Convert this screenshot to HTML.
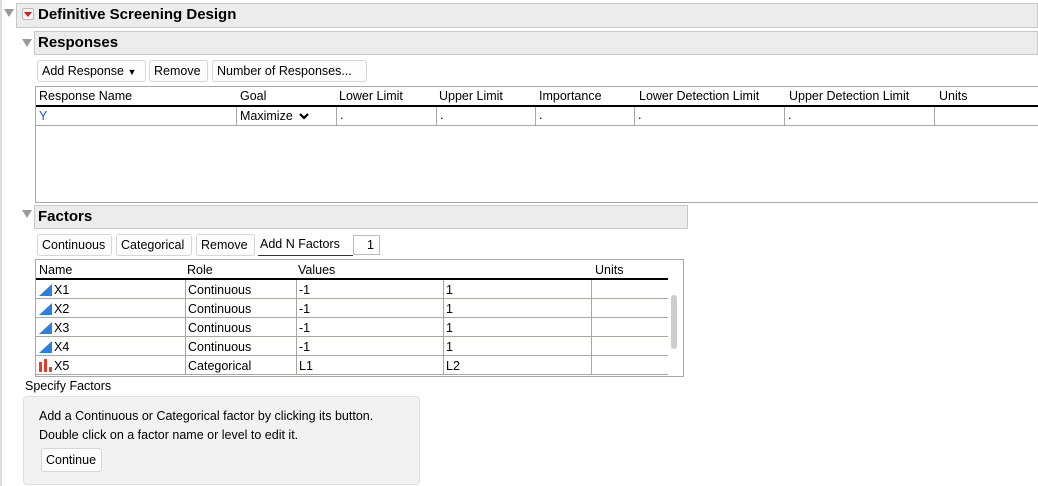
<!DOCTYPE html>
<html><head><style>
*{box-sizing:border-box;margin:0;padding:0}
body{width:1038px;height:486px;background:#fff;font-family:"Liberation Sans",sans-serif;font-size:12.5px;color:#000;position:relative;overflow:hidden}
.a{position:absolute}
.bar{position:absolute;background:#ececec;border:1px solid #c8c8c8;font-weight:bold;font-size:15px;padding-left:3px;line-height:22px}
.tri{position:absolute;width:0;height:0;border-left:5px solid transparent;border-right:5px solid transparent;border-top:8px solid #9a9a9a}
.btn{position:absolute;height:22px;border:1px solid #d6d6d6;border-radius:3px;background:#fdfdfd;line-height:20px;padding-left:4px;white-space:nowrap}
.hl{position:absolute;height:1px;background:#a8a8a0}
.vl{position:absolute;width:1px;background:#a8a8a0}
.t{position:absolute;white-space:nowrap}
.blue{color:#1a5fb0}
</style></head><body>
<div class="a" style="left:0;top:0;width:2px;height:486px;background:#ddd"></div>
<div class="tri" style="left:4px;top:9px"></div>
<div class="bar" style="left:16px;top:3px;width:1022px;height:25px;padding-left:21px">Definitive Screening Design</div>
<div class="a" style="left:22px;top:8px;width:12px;height:12px;border:1px solid #bbb;border-radius:2px;background:#f6f6f6"></div>
<div class="a" style="left:24px;top:12px;width:0;height:0;border-left:4px solid transparent;border-right:4px solid transparent;border-top:5px solid #d02020"></div>

<div class="tri" style="left:22px;top:39px"></div>
<div class="bar" style="left:34px;top:31px;width:1004px;height:24px">Responses</div>
<div class="btn" style="left:37px;top:60px;width:109px">Add Response <span style="font-size:9px">▼</span></div>
<div class="btn" style="left:149px;top:60px;width:59px">Remove</div>
<div class="btn" style="left:212px;top:60px;width:155px">Number of Responses...</div>

<div class="a" style="left:35px;top:86px;width:1010px;height:117px;border:1px solid #a8a8a8"></div>
<div class="a" style="left:36px;top:105px;width:1002px;height:2px;background:#000"></div>
<div class="hl" style="left:36px;top:125px;width:1002px"></div>
<div class="t" style="left:39px;top:89px">Response Name</div>
<div class="t" style="left:240px;top:89px">Goal</div>
<div class="t" style="left:339px;top:89px">Lower Limit</div>
<div class="t" style="left:439px;top:89px">Upper Limit</div>
<div class="t" style="left:539px;top:89px">Importance</div>
<div class="t" style="left:639px;top:89px">Lower Detection Limit</div>
<div class="t" style="left:789px;top:89px">Upper Detection Limit</div>
<div class="t" style="left:939px;top:89px">Units</div>
<div class="vl" style="left:236px;top:107px;height:18px"></div>
<div class="vl" style="left:336px;top:107px;height:18px"></div>
<div class="vl" style="left:436px;top:107px;height:18px"></div>
<div class="vl" style="left:535px;top:107px;height:18px"></div>
<div class="vl" style="left:634px;top:107px;height:18px"></div>
<div class="vl" style="left:784px;top:107px;height:18px"></div>
<div class="vl" style="left:934px;top:107px;height:18px"></div>
<div class="t blue" style="left:39px;top:109px">Y</div>
<div class="t" style="left:240px;top:109px">Maximize</div>
<svg class="a" style="left:298px;top:111px" width="12" height="10"><path d="M2 3 L6 7 L10 3" stroke="#000" stroke-width="2.2" fill="none"/></svg>
<div class="t" style="left:340px;top:108px">.</div>
<div class="t" style="left:440px;top:108px">.</div>
<div class="t" style="left:539px;top:108px">.</div>
<div class="t" style="left:638px;top:108px">.</div>
<div class="t" style="left:788px;top:108px">.</div>

<div class="tri" style="left:22px;top:210px"></div>
<div class="bar" style="left:34px;top:205px;width:654px;height:24px">Factors</div>
<div class="btn" style="left:37px;top:234px;width:75px">Continuous</div>
<div class="btn" style="left:116px;top:234px;width:76px">Categorical</div>
<div class="btn" style="left:196px;top:234px;width:59px">Remove</div>
<div class="t" style="left:260px;top:237px">Add N Factors</div>
<div class="a" style="left:258px;top:255px;width:95px;height:1px;background:#333"></div>
<div class="a" style="left:353px;top:235px;width:27px;height:20px;border:1px solid #bbb;text-align:right;padding-right:5px;line-height:18px">1</div>

<div class="a" style="left:35px;top:259px;width:649px;height:118px;border:1px solid #a8a8a8"></div>
<div class="a" style="left:36px;top:278px;width:632px;height:2px;background:#000"></div>
<div class="t" style="left:39px;top:263px">Name</div>
<div class="t" style="left:187px;top:263px">Role</div>
<div class="t" style="left:298px;top:263px">Values</div>
<div class="t" style="left:595px;top:263px">Units</div>
<div class="hl" style="left:36px;top:298px;width:632px"></div>
<div class="hl" style="left:36px;top:317px;width:632px"></div>
<div class="hl" style="left:36px;top:336px;width:632px"></div>
<div class="hl" style="left:36px;top:355px;width:632px"></div>
<div class="hl" style="left:36px;top:374px;width:632px"></div>
<div class="vl" style="left:185px;top:280px;height:95px"></div>
<div class="vl" style="left:296px;top:280px;height:95px"></div>
<div class="vl" style="left:443px;top:280px;height:95px"></div>
<div class="vl" style="left:591px;top:280px;height:95px"></div>
<div class="a" style="left:671px;top:295px;width:6px;height:54px;border-radius:3px;background:#cdcdcd"></div>

<svg class="a" style="left:39px;top:283px" width="16" height="90">
<polygon points="0,13 13,1 13,13" fill="#2a7fe0"/>
<polygon points="0,32 13,20 13,32" fill="#2a7fe0"/>
<polygon points="0,51 13,39 13,51" fill="#2a7fe0"/>
<polygon points="0,70 13,58 13,70" fill="#2a7fe0"/>
<rect x="0" y="79" width="3" height="10" fill="#e83a2a"/><rect x="5" y="76" width="3" height="13" fill="#e83a2a"/><rect x="10" y="84" width="3" height="5" fill="#e83a2a"/>
</svg>
<div class="t" style="left:54px;top:283px">X1</div><div class="t" style="left:188px;top:283px">Continuous</div><div class="t" style="left:299px;top:283px">-1</div><div class="t" style="left:446px;top:283px">1</div>
<div class="t" style="left:54px;top:302px">X2</div><div class="t" style="left:188px;top:302px">Continuous</div><div class="t" style="left:299px;top:302px">-1</div><div class="t" style="left:446px;top:302px">1</div>
<div class="t" style="left:54px;top:321px">X3</div><div class="t" style="left:188px;top:321px">Continuous</div><div class="t" style="left:299px;top:321px">-1</div><div class="t" style="left:446px;top:321px">1</div>
<div class="t" style="left:54px;top:340px">X4</div><div class="t" style="left:188px;top:340px">Continuous</div><div class="t" style="left:299px;top:340px">-1</div><div class="t" style="left:446px;top:340px">1</div>
<div class="t" style="left:54px;top:359px">X5</div><div class="t" style="left:188px;top:359px">Categorical</div><div class="t" style="left:299px;top:359px">L1</div><div class="t" style="left:446px;top:359px">L2</div>

<div class="t" style="left:25px;top:379px">Specify Factors</div>
<div class="a" style="left:23px;top:396px;width:397px;height:89px;background:#f2f2f2;border:1px solid #e0e0e0;border-radius:4px"></div>
<div class="t" style="left:39px;top:409px">Add a Continuous or Categorical factor by clicking its button.</div>
<div class="t" style="left:39px;top:428px">Double click on a factor name or level to edit it.</div>
<div class="btn" style="left:41px;top:448px;width:61px;height:24px;line-height:22px">Continue</div>
</body></html>
